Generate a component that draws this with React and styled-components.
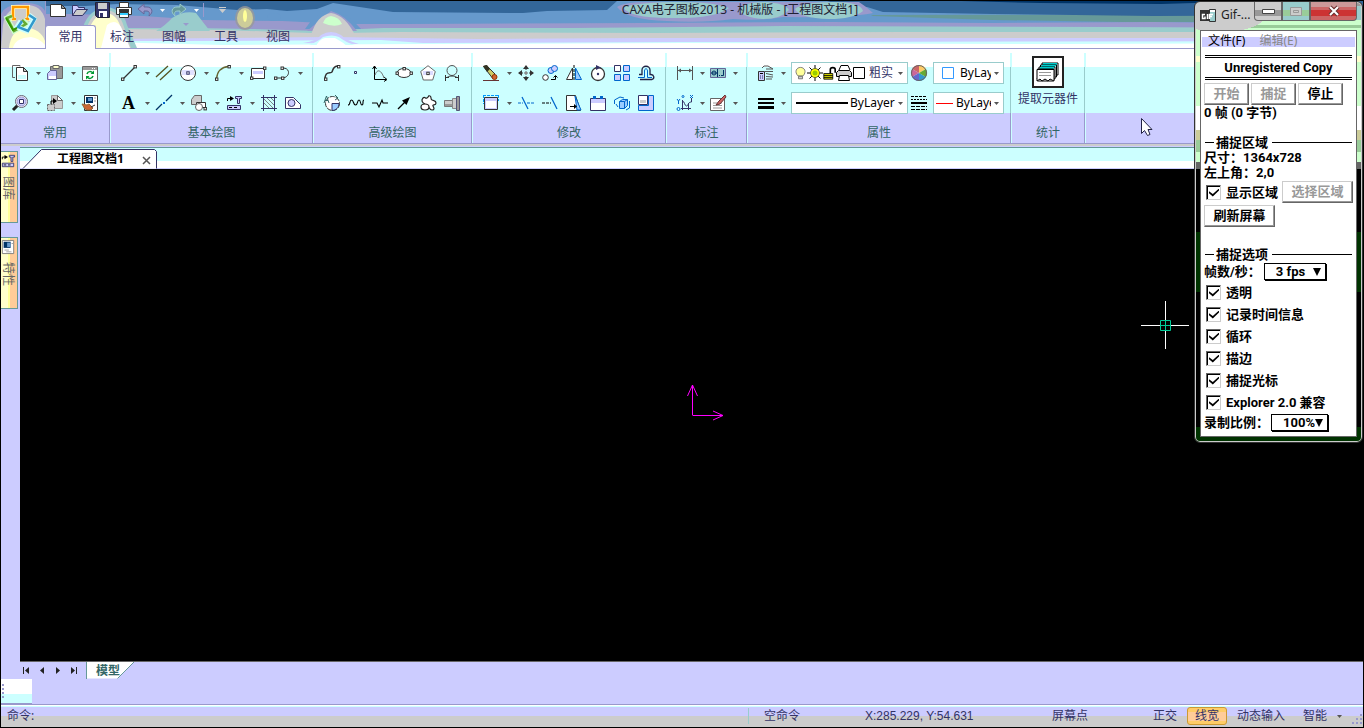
import React from 'react';
import styled, { createGlobalStyle, css } from 'styled-components';

const Global = createGlobalStyle`
  *, *::before, *::after { box-sizing: border-box; }
  body { margin: 0; background: #000; overflow: hidden; }
  body, button, select, input {
    font-family: "Noto Sans", "Noto Sans CJK SC", sans-serif;
    font-size: 12px;
    line-height: 16px;
  }
  button { border: 0; padding: 0; margin: 0; background: none; color: inherit; white-space: nowrap; }
  select { appearance: none; border: 0; margin: 0; padding: 0; background: none; color: inherit; border-radius: 0; }
  svg { display: block; flex: none; overflow: visible; }
`;

const Screen = styled.div`
  position: relative;
  display: flex;
  flex-direction: column;
  height: 100vh;
  border: 1px solid #000;
  background: #ccf;
  color: #336;
`;

/* ---------- header ---------- */

const Header = styled.header`
  position: relative;
  display: flex;
  height: 48px;
  border-bottom: 1px solid #99c;
  background: #fff;
`;

const Glass = styled.svg`
  position: absolute;
  left: 0;
  top: 0;
  width: 100%;
  height: 47px;
`;

const AppButton = styled.button`
  position: relative;
  width: 44px;
  padding: 4px 0 0 3px;
  display: flex;
  align-items: flex-start;
`;

const HeaderMain = styled.div`
  position: relative;
  flex: 1;
  display: flex;
  flex-direction: column;
  justify-content: space-between;
`;

const TitleRow = styled.div`
  display: flex;
  align-items: center;
  height: 18px;
`;

const QuickBar = styled.div`
  display: flex;
  align-items: center;
  width: 183px;
  height: 18px;
  padding-left: 1px;
  border-left: 1px solid #99c;
`;

const QuickButton = styled.button`
  display: flex;
  align-items: center;
  justify-content: center;
  width: ${p => p.$narrow ? 12 : 22}px;
  height: 18px;
`;

const QuickEnd = styled.div`
  display: flex;
  align-items: center;
  height: 14px;
  margin-left: 1px;
  padding-left: 12px;
  border-left: 1px solid #99c;
`;

const Title = styled.h1`
  flex: 1;
  margin: 0;
  padding-right: 111px;
  font-size: 12px;
  font-weight: 400;
  text-align: center;
  color: #223;
`;

const Tabs = styled.nav`
  display: flex;
  height: 24px;
  margin-bottom: -1px;
`;

const Tab = styled.button`
  width: ${p => p.$active ? 51 : 52}px;
  height: 24px;
  padding-bottom: 1px;
  ${p => p.$active && css`
    background: #fff;
    border: 1px solid #99c;
    border-bottom: 0;
    border-radius: 3px 3px 0 0;
  `}
`;

/* ---------- ribbon ---------- */

const Ribbon = styled.section`
  display: grid;
  grid-template-columns: 110px 203px 159px 194px 81px 264px 74px 1fr;
  height: 97px;
  border-bottom: 2px solid #ccc;
  box-shadow: inset 0 -1px #99c;
  background: linear-gradient(#fff 0 18px, #cff 18px 64px, #ccf 64px);
`;

const GroupBox = styled.section`
  display: flex;
  flex-direction: column;
  gap: 8px;
  padding: 13px 0 0 ${p => p.$first ? 11 : 10}px;
  margin-bottom: 1px;
  background:
    linear-gradient(#cff, #cff) right 0 top 4px / 1px 100% no-repeat,
    linear-gradient(#cff 0 14px, #9cc 14px 60px, #99c 60px) right 1px top 4px / 1px 100% no-repeat;
`;

const Row = styled.div`
  display: flex;
  align-items: center;
  height: 22px;
`;

const GroupTitle = styled.h2`
  margin: 3px 2px 0 ${p => p.$first ? -11 : -10}px;
  font-size: 12px;
  line-height: 16px;
  font-weight: 400;
  text-align: center;
  color: #366;
`;

const ToolBox = styled.div`
  display: flex;
  align-items: center;
  width: ${p => p.$arrow ? (p.$tight ? 33 : 35) : 24}px;
`;

const ToolButton = styled.button`
  width: 16px;
  height: 18px;
  display: flex;
  align-items: center;
`;

const ArrowButton = styled.button`
  width: ${p => p.$tight ? 17 : 19}px;
  height: 18px;
  display: flex;
  align-items: center;
  justify-content: center;
  padding-left: 2px;
`;

const Combo = styled.label`
  display: flex;
  align-items: center;
  width: ${p => p.$wide ? 117 : 71}px;
  height: 22px;
  padding: 0 4px;
  gap: 3px;
  background: #fff;
  border: 1px solid #9cc;
`;

const LayerMarks = styled.span`
  display: flex;
  align-items: center;
  margin-left: -2px;
`;

const WideLine = styled.svg`
  margin-right: -2px;
`;

const ComboSelect = styled.select`
  flex: 1;
  min-width: 0;
  height: 20px;
  color: ${p => p.$blue ? '#336' : '#000'};
`;

const WheelButton = styled.button`
  width: 25px;
  padding-left: 3px;
  height: 18px;
  display: flex;
  align-items: center;
`;

const ExtractButton = styled.button`
  display: flex;
  flex-direction: column;
  align-items: center;
  gap: 3px;
  height: 52px;
  margin: -6px 4px 6px -8px;
  color: #336;
`;

/* ---------- work area ---------- */

const Work = styled.div`
  flex: 1;
  display: flex;
  min-height: 0;
  padding-top: 1px;
`;

const SideBar = styled.aside`
  width: 19px;
  padding-top: 4px;
  display: flex;
  flex-direction: column;
  gap: 14px;
`;

const SideTab = styled.button`
  width: 17px;
  height: 72px;
  display: flex;
  flex-direction: column;
  align-items: flex-start;
  gap: 8px;
  padding-top: 2px;
  border: 1px solid #699;
  border-left: 0;
  background: linear-gradient(90deg, #ffc 0 7px, #ff9 7px 9px, #fc9 9px);
  color: #666;
`;

const SideText = styled.span`
  writing-mode: vertical-rl;
  text-orientation: sideways;
  line-height: 14px;
`;

const DocArea = styled.main`
  flex: 1;
  display: flex;
  flex-direction: column;
  min-width: 0;
`;

const DocTabs = styled.div`
  display: flex;
  height: 22px;
  border-top: 1px solid #699;
  background: linear-gradient(#cff 0 13px, #fff 13px 20px, #ccf 20px);
`;

const DocTab = styled.div`
  position: relative;
  display: flex;
  align-items: center;
  width: 138px;
  height: 21px;
  padding: 0 7px 0 37px;
  justify-content: space-between;
  font-weight: 700;
  color: #000;
  > svg { position: absolute; left: 0; top: 0; }
  > span { position: relative; }
  > button { position: relative; padding-top: 3px; }
`;

const Canvas = styled.div`
  position: relative;
  flex: 1;
  display: flex;
  align-items: center;
  justify-content: center;
  background: #000;
  border-bottom: 1px solid #666;
`;

const Axis = styled.svg`
  margin: -30px 0 0 26px;
`;

const CrossHair = styled.svg`
  position: absolute;
  right: 174px;
  top: 132px;
`;

const Pointer = styled.svg`
  position: absolute;
  right: 209px;
  top: 116px;
`;

const SheetBar = styled.div`
  display: flex;
  height: 17px;
`;

const NavButton = styled.button`
  width: 16px;
  height: 17px;
  padding-right: 4px;
  display: flex;
  align-items: center;
  justify-content: center;
`;

const SheetTab = styled.button`
  position: relative;
  width: 49px;
  height: 17px;
  margin-left: 2px;
  padding-left: 10px;
  text-align: left;
  font-weight: 700;
  line-height: 17px;
  color: #366;
  > svg { position: absolute; left: 0; top: 0; }
  > span { position: relative; }
`;

const CommandArea = styled.div`
  height: 26px;
  border-bottom: 1px solid #99c;
`;

const Gripper = styled.div`
  width: 31px;
  height: 25px;
  border-bottom: 1px solid #99c;
  background: linear-gradient(#fff 0 15px, #cff 15px);
`;

const Status = styled.footer`
  display: flex;
  align-items: center;
  height: 22px;
  padding-bottom: 1px;
  border-top: 1px solid #fff;
  background: linear-gradient(#cff 0 1px, #ccf 1px 10px, #ccc 10px);
`;

const Command = styled.div`
  flex: 1;
  padding-left: 6px;
`;

const StatusCell = styled.div`
  width: ${p => p.$w}px;
  padding-left: ${p => p.$first ? 15 : 0}px;
  border-left: ${p => p.$first ? '1px solid #9cc' : '0'};
  font-family: "Liberation Sans", "Noto Sans CJK SC", sans-serif;
  white-space: nowrap;
`;

const StatusButton = styled.button`
  height: 18px;
  padding: 0 7px;
  border: 1px solid ${p => p.$on ? '#c93' : 'transparent'};
  border-radius: 3px;
  background: ${p => p.$on ? 'linear-gradient(#fc6 0 4px, #fc9 4px 13px, #fc6 13px)' : 'none'};
  display: flex;
  align-items: center;
  gap: 10px;
`;

const StatusEnd = styled.div`
  display: flex;
  align-items: center;
  gap: 2px;
  width: 218px;
`;

const SizeGrip = styled.svg`
  margin-left: auto;
  align-self: flex-end;
`;

/* ---------- recorder window ---------- */

const GifWindow = styled.aside`
  position: absolute;
  right: 0;
  top: 0;
  width: 169px;
  padding: 0 5px 5px;
  border: 1px solid #333;
  border-radius: 6px;
  box-shadow: inset 0 0 0 1px #ccc;
  color: #000;
  background:
    radial-gradient(ellipse 50px 20px at 26px 12px, #ccc 0 90%, transparent 91%),
    linear-gradient(#999 0 4px, #9cc 4px 18px, #cfc 18px 23px, #9c9 23px 26px, #cfc 26px 54px, #ffc 54px 60px, #cfc 60px 104px,
      #fff 104px 128px, #cc9 128px 138px, #9c9 138px 150px, #cfc 150px 160px, #666 160px 167px, #000 167px 230px, #030 230px 290px,
      #000 290px 425px, #030 425px);
`;

const GifTitle = styled.div`
  display: flex;
  align-items: flex-start;
  height: 28px;
  gap: 5px;
  > svg { margin-top: 5px; }
  > span { width: 28px; margin-top: 5px; color: #222; white-space: nowrap; }
`;

const WindowButtons = styled.div`
  display: flex;
`;

const CaptionButton = styled.button`
  width: ${p => p.$close ? 47 : 28}px;
  height: 19px;
  display: flex;
  align-items: center;
  justify-content: center;
  border: 1px solid #666;
  border-top: 0;
  border-radius: ${p => p.$close ? '0 0 4px 0' : p.$first ? '0 0 0 4px' : '0'};
  background: ${p => p.$close
    ? 'linear-gradient(#c99 0 5px, #c66 5px 8px, #c33 8px 14px, #c66 14px)'
    : p.$first
      ? 'linear-gradient(#ccc 0 8px, #999 8px 14px, #ccc 14px)'
      : 'linear-gradient(#9cc 0 8px, #9c9 8px 14px, #9cc 14px)'};
`;

const GifBody = styled.div`
  background: #fff;
  border: 1px solid #666;
  padding: 0 4px 4px 3px;
  font-family: Roboto, "Noto Sans CJK SC", sans-serif;
  font-size: 13px;
  font-weight: 700;
  line-height: 15px;
`;

const GifMenu = styled.div`
  display: flex;
  gap: 14px;
  height: 20px;
  margin: 0 -3px 0 -2px;
  padding: 0 0 1px 6px;
  background: linear-gradient(#fff 0 6px, #ccf 6px 16px, #fff 16px);
`;

const MenuButton = styled.button`
  color: ${p => p.disabled ? '#888' : '#000'};
`;

const Banner = styled.div`
  height: 25px;
  margin: 4px 0 3px 1px;
  border: solid #000;
  border-width: 3px 0;
  border-style: double none;
  text-align: center;
  line-height: 19px;
`;

const ButtonRow = styled.div`
  display: flex;
  align-items: center;
  gap: 2px;
`;

const ClassicButton = styled.button`
  width: ${p => p.$wide ? 71 : 45}px;
  height: 22px;
  flex: none;
  font: inherit;
  line-height: 16px;
  background: #fff;
  color: ${p => p.disabled ? '#999' : '#000'};
  border: 1px solid;
  border-color: #ccc #666 #666 #ccc;
  box-shadow: inset -1px -1px #999;
`;

const Legend = styled.h3`
  display: flex;
  align-items: center;
  gap: 2px;
  margin: ${p => p.$gap}px 0 0 1px;
  font: inherit;
  &::before { content: ""; width: 9px; height: 1px; background: #000; }
  &::after { content: ""; flex: 1; height: 1px; margin-left: 2px; background: #000; }
`;

const Line = styled.div`
  height: 15px;
`;

const CheckLabel = styled.label`
  display: flex;
  align-items: center;
  gap: 5px;
  height: 22px;
  padding-left: 2px;
  white-space: nowrap;
`;

const CheckBox = styled.input`
  appearance: none;
  position: relative;
  flex: none;
  width: 15px;
  height: 15px;
  margin: 0;
  background: #fff;
  border: 1px solid;
  border-color: #666 #ccc #ccc #666;
  box-shadow: inset 1px 1px #000;
  &:checked::after {
    content: "";
    position: absolute;
    left: 2px;
    top: 3px;
    width: 10px;
    height: 8px;
    background: #000;
    clip-path: polygon(0 35%, 0 60%, 38% 100%, 100% 25%, 100% 0, 38% 70%);
  }
`;

const CheckRow = styled.div`
  display: flex;
  align-items: center;
  justify-content: space-between;
  height: 22px;
  margin: 1px -1px 2px 0;
`;

const SelectRow = styled.label`
  display: flex;
  align-items: center;
  gap: ${p => p.$gap}px;
  height: 19px;
  white-space: nowrap;
`;

const DropBox = styled.span`
  display: flex;
  align-items: center;
  width: ${p => p.$w}px;
  height: 17px;
  padding: 0 4px 0 11px;
  border: 1px solid #000;
  box-shadow: 1px 1px #000;
`;

const DropSelect = styled.select`
  flex: 1;
  min-width: 0;
  height: 15px;
  font: inherit;
`;

/* ---------- icons ---------- */

const K = '#333';
const B = '#06c';
const sq = (x, y, c = K) => <rect key={`${x}-${y}`} x={x - 1} y={y - 1} width="2.4" height="2.4" fill="#fff" stroke={c} />;

const icons = {
  copy: <><path d="M8 1.5V.5H.5v12H3" stroke="#666" /><path d="M4.500 2.500h7l4 4v9h-11z" fill="#fff" stroke={K} /><path d="M11.500 2.500v4h4z" fill="#ccc" stroke={K} /><path d="M6 10h8v4H6z" fill="#cff" /></>,
  paste: <><path d="M3.500 1.500h12v12h-12z" fill="#999" stroke="#666" /><path d="M6 .5h6v3H6z" fill="#ffc" stroke="#666" /><path d="M.5 8.500l3-3h6v9h-9z" fill="#ccf" stroke="#669" /><path d="M2 11h7v3H2z" fill="#fff" /></>,
  refresh: <><path d="M.5 1.500h15v14H.5z" fill="#fff" stroke="#666" /><path d="M1 2h14v3H1z" fill="#999" /><path d="M10 3.500h1m1 0h1" stroke="#fff" /><path d="M5 9c1-3 4-3 6-1M11 11c-1 3-4 3-6 1" stroke="#093" strokeWidth="1.500" /><path d="M12 5.500V9H8.500zM4 14.500V11h3.500z" fill="#093" /></>,
  zoom: <><path d="M6 10L1 15" stroke="#222" strokeWidth="3" /><circle cx="9.500" cy="6.500" r="6" fill="#fff" stroke="#667" /><circle cx="9.500" cy="6.500" r="4.500" fill="#ccf" stroke="#99c" /><path d="M7.500 4.500h4v4h-4z" fill="#fff" stroke="#336" /></>,
  insert: <><path d="M4.500.5h6l5 5v8h-11z" fill="#ccc" stroke="#999" /><path d="M10.500.5v5h5z" fill="#fff" stroke="#666" /><path d="M.5 9.500h7v6h-7z" fill="#ccc" stroke="#666" strokeDasharray="2 1" /><path d="M4 9V6h3" stroke="#000" /><path d="M6 3l4 3-4 3z" fill="#000" /></>,
  brush: <><path d="M2.500.5h13v15h-13z" fill="#fff" stroke={K} /><path d="M4 2h7v6H4z" fill="#036" /><path d="M6 3h4v3H6z" fill="#69c" /><path d="M12 3h2M12 6h2" stroke="#999" /><path d="M0 9l5 1 2-1 4 4-2 2H5c-3-1-3-3-5-6z" fill="#c63" stroke="#963" /><path d="M9 12l4-2" stroke={K} /></>,
  props: <><path d="M1.500.5h13v15h-13z" fill="#fff" stroke="#777" /><path d="M3 2h8v7H3z" fill="#036" /><path d="M7 3h4v5H7z" fill="#69c" /><path d="M4 11.500h5M6 13.500h6M12 4h2" stroke="#999" /></>,
  line: <><path d="M2 14L14 2" stroke={K} strokeWidth="1.300" />{sq(1.500, 14)}{sq(14, 1.500)}</>,
  parallel: <path d="M0 12L12 1M4 15L16 4" stroke="#552" strokeWidth="1.300" />,
  circle: <><circle cx="8" cy="8" r="7.500" fill="#fff" stroke={K} /><path d="M2 5h12v5H2z" fill="#ccf" opacity=".6" />{sq(7.800, 7.800, '#336')}</>,
  arc: <><path d="M1.500 14C2 7 6 2 14 1.500" stroke="#663" strokeWidth="1.300" />{sq(1.500, 14)}{sq(14, 1.500)}</>,
  rect: <><path d="M1.500 3.500h13v10h-13z" fill="#fff" stroke={K} /><path d="M3 6h10v3H3z" fill="#ccf" />{sq(1.500, 13)}{sq(14.500, 3)}</>,
  poly: <><path d="M1 13h7c8 0 9-10 1-10" stroke={K} />{sq(1.500, 13)}{sq(8.500, 13)}{sq(8, 3)}</>,
  text: <text x="1" y="14" fontFamily="Liberation Serif, serif" fontWeight="700" fontSize="18" fill="#000">A</text>,
  center: <><path d="M0 15l6-6M10 6l6-6" stroke="#036" strokeWidth="1.300" /><path d="M7 7h2v2H7z" fill="#06c" /></>,
  blocks: <><path d="M.5 4.500l3-4h7v9H.5z" fill="#ccc" stroke="#666" /><path d="M5.500 7.500h9v5h-9z" fill="#fff" stroke={K} /><circle cx="8" cy="12" r="3.500" fill="#fff" stroke="#666" />{sq(14, 13.500)}</>,
  library: <><path d="M1.500 6V3.500H5" stroke="#000" /><path d="M4 1l4 2.500L4 6z" fill="#000" /><path d="M9.500 1.500h6v2h-2v5h-2v-5h-2z" fill="#ccf" stroke="#336" /><path d="M1.500 10.500h13v4h-13z" fill="#ccf" stroke="#336" /><path d="M3 12.500h10" stroke="#000" strokeDasharray="3 2" /></>,
  hatch: <><path d="M2.500 0v16M13.500 0v16M0 2.500h16M0 13.500h16" stroke="#336" /><path d="M3 4l9 9M3 8l5 5M6 3l7 7M10 3l3 3" stroke="#666" strokeWidth=".8" /></>,
  region: <><path d="M.5 13.500v-11h8l7 7v4z" fill="#fff" stroke="#336" /><circle cx="6.500" cy="8" r="3.500" fill="#ccf" stroke="#336" /></>,
  spline: <><path d="M1 14c0-9 6-5 7-7s1-6 6-6" stroke={K} strokeWidth="1.500" />{sq(1.500, 14)}{sq(14.500, 1.500)}</>,
  point: <path d="M6.500 6.500h2v2h-2z" fill="#fff" stroke="#336" />,
  formula: <><path d="M2.500 1v13.500H14" stroke="#000" /><path d="M.5 4l2-3 2 3M12 12l3 2.500-3 2" stroke="#000" /><path d="M3 10c3-8 7-3 9 3" stroke="#666" /></>,
  ellipse: <><ellipse cx="8" cy="8" rx="7" ry="4.500" fill="#fff" stroke={K} />{sq(8, 3.500)}{sq(1, 8)}{sq(15, 8)}</>,
  polygon: <><path d="M8 .7l7.300 5.800L12.700 15H3.300L.7 6.500z" fill="#fff" stroke="#666" /><path d="M3 6h10v4H3z" fill="#ccf" opacity=".7" />{sq(7.800, 8.200)}</>,
  roundhole: <><circle cx="8" cy="5.500" r="5" fill="#cff" stroke="#555" /><path d="M1.500 10v6M14.500 10v6M1 12.500h4M11 12.500h4M3 12.500c3-2 7-2 10 0" stroke={K} /></>,
  detail: <><circle cx="8.500" cy="8.500" r="7" fill="#fff" stroke={K} strokeDasharray="5 1" /><path d="M8 8.500h7c0 4-3 7-7 7z" fill="#9cf" stroke="#336" /><path d="M0 8l2.500-7L5 8M1 5.500h3M11 0l3 3-3 2" stroke="#366" /></>,
  wave: <path d="M0 10c3 0 1-5 3.500-5S5 10 7.500 10 9 5 11 5s1 5 3 5 0-5 2-5" stroke="#000" strokeWidth="1.100" />,
  breakline: <path d="M0 8h5l2 4 3-7 1 3h5" stroke="#000" strokeWidth="1.100" />,
  arrow: <><path d="M2 14L10 6" stroke="#000" strokeWidth="1.300" /><path d="M14 2L6 5.500 10.500 10z" fill="#000" /></>,
  gear: <><path d="M5 9C2 8 1 5 3 3s2 1 4 0 1-3 3-2 0 3 2 4 4 0 4 3-4 1-3 3 2 4-1 4-2-3-4-3" fill="#fff" stroke="#222" strokeWidth="1.200" /><ellipse cx="5" cy="12" rx="4" ry="3" fill="#fff" stroke="#222" strokeWidth="1.200" /></>,
  shaft: <><path d="M.5 5.500h8v6h-8z" fill="#999" stroke="#777" /><path d="M8.500 3.500h4v10h-4z" fill="#ccc" stroke="#888" /><path d="M12.500 1.500h3v14h-3z" fill="#999" stroke="#557" /><path d="M1 6h7v3H1z" fill="#ccc" /></>,
  eraser: <><path d="M0 15.500h16" stroke="#633" /><path d="M.5 1.500l3-1L12 9l-3 3.500z" fill="#cc6" stroke={K} /><path d="M0 1l4-1 3 4-3 3z" fill="#332" /><circle cx="11.500" cy="12" r="2.500" fill="#c63" stroke="#930" /></>,
  move: <><path d="M8 1v4M8 11v4M1 8h4M11 8h4" stroke="#333" /><path d="M8 0l3 4H5zM8 16l3-4H5zM0 8l4-3v6zM16 8l-4-3v6z" fill="#333" /><path d="M7 7h2v2H7z" fill="#fff" stroke="#666" /></>,
  clone: <><circle cx="3.500" cy="12.500" r="2.800" fill="#fff" stroke={K} /><circle cx="9" cy="5.500" r="3" fill="#ccf" stroke={B} /><circle cx="12.500" cy="3.500" r="3" fill="#ccf" stroke={B} /><path d="M9 14.500h4.500V11M11.500 12.500l2-2 2 2" stroke="#000" /></>,
  mirror: <><path d="M8 0v16" stroke="#000" strokeDasharray="3 1" /><path d="M6.500 3v11.500h-6z" fill="#fff" stroke={K} /><path d="M9.500 3v11.500h6z" fill="#9cf" stroke={B} /></>,
  rotate: <><circle cx="8" cy="9" r="6.500" fill="#fff" stroke={K} strokeWidth="1.300" /><path d="M6 0l5 2.500L6 5z" fill="#336" /><circle cx="8" cy="9" r="1.200" fill="#336" /></>,
  array: <><path d="M.5.5h6v6h-6z" fill="#fff" stroke="#336" /><path d="M9.500.5h6v6h-6zM.5 9.500h6v6h-6zM9.500 9.500h6v6h-6z" fill="#ccf" stroke={B} /></>,
  offset: <><path d="M2 14.500h12c3-1 2-5-1-5h-1V5C12 0 4 0 4 5v4.500H1" stroke="#224" strokeWidth="1.300" /><path d="M0 12.500h6.500V6c0-3 3-3 3 0v6.500H14" fill="#cff" stroke={B} /></>,
  stretch: <><path d="M1.500 2.500h13v12h-13z" fill="#ccf" stroke={K} /><path d="M3 6h10v7H3z" fill="#fff" /><path d="M0 .5h16M.5 0v9M15.500 0v6" stroke="#09f" strokeDasharray="3 1" /></>,
  trim: <><path d="M0 8h5M9 8h8" stroke={B} strokeDasharray="3 1" /><path d="M4 2l6 12" stroke={B} strokeWidth="1.200" /></>,
  extend: <><path d="M0 8h9" stroke="#000" strokeDasharray="3 1" /><path d="M9 2l6 12" stroke={B} strokeWidth="1.200" /></>,
  edge: <><path d="M.5.5h9l5 15H.5z" fill="#fff" stroke={K} /><path d="M9 1l6 14h-4z" fill="#9cf" stroke={B} /><path d="M4 11.500h6" stroke="#000" /><path d="M8 9l3 2.500L8 14z" fill="#000" /></>,
  breakpt: <><path d="M.5 3.500h15v12H.5z" fill="#fff" stroke="#336" /><path d="M1 4h14v4H1z" fill="#ccf" /><path d="M3 1h3v3H3zM10 1h3v3h-3z" fill="#06c" /></>,
  explode: <><path d="M5.500 6.500l3-2h5v6l-3 3h-5z" fill="#9cf" stroke={B} /><path d="M5.500 6.500h5v7M10.500 6.500l3-2" stroke={B} /><path d="M.5 5L6 2l4 1M2 9l2 3M12 15l3.500-2V6M.5 5v4" stroke={B} /></>,
  scale: <><path d="M.5 15.500v-5h10V.5h5v15z" fill="#ccf" stroke={B} /><path d="M.5.5h9v9h-9z" fill="#fff" stroke="#336" /><path d="M2 5h6v3H2z" fill="#ccc" /></>,
  dim: <><path d="M.5 1v14M15.500 1v14M1 5.500h14" stroke="#555" /><path d="M1 5.500l3-2v4zM15 5.500l-3-2v4z" fill="#555" /></>,
  tolerance: <><path d="M.5 3.500h15v9H.5z" fill="#9cc" stroke="#669" /><path d="M7.500 4v8" stroke="#036" /><circle cx="4" cy="8" r="2" stroke="#036" /><path d="M1 8h6M9 10.500h1M11 10.500h2.500V5" stroke="#036" /></>,
  coord: <><path d="M5.500 5v10M4 13.500h10M5.500 6c2 0 2 5 4 5s1-4 5-4V3" stroke="#336" /><path d="M11.500 8v7" stroke="#336" /><circle cx="1.500" cy="14" r="1.500" stroke={B} /><path d="M0 4l1.500 2v3M3 4L1.500 6" stroke={B} /><circle cx="6" cy="1.500" r="1" stroke={B} /><path d="M13 0l3 3M16 0l-3 3" stroke={B} /></>,
  editdim: <><path d="M.5 3.500h14v12H.5z" fill="#fff" stroke="#666" /><path d="M3 8h9M3 10.500h9M3 13h9" stroke="#999" /><path d="M15 0L9 6l-3 4 4-1 6-7z" fill="#c66" stroke="#633" /></>,
  layers: <><path d="M4 3l2-2h4l5 3H8M7 6.500h8M8 8.500l7 1.500M8 11.500l7 .5M8 14h6" stroke="#555" /><path d="M.5 6.500h6v9h-6z" fill="#ccf" stroke={K} /><path d="M2 8.500h3" stroke="#000" /><path d="M2 11h1m1 0h1m-3 2h1m1 0h1" stroke="#336" /></>,
  weight: <><path d="M0 4h16" stroke="#000" strokeWidth="2" /><path d="M0 8h16" stroke="#000" strokeWidth="2" /><path d="M0 12.500h16" stroke="#000" strokeWidth="3" /></>,
  styles: <><path d="M0 1.500h16" stroke="#000" strokeDasharray="3 1" /><path d="M0 4.500h16" stroke="#000" strokeDasharray="2 1" /><path d="M0 8h16" stroke="#000" strokeWidth="2" /><path d="M0 11.500h16M0 14.500h16" stroke="#000" strokeDasharray="4 1" /></>,
  wheel: <><path d="M8 8V0a8 8 0 0 1 7 4z" fill="#fc6" /><path d="M8 8V0a8 8 0 0 0-7 4z" fill="#c66" /><path d="M8 8L1 4a8 8 0 0 0 0 8z" fill="#c69" /><path d="M8 8l-7 4a8 8 0 0 0 7 4z" fill="#66c" /><path d="M8 8v8a8 8 0 0 0 7-4z" fill="#39c" /><path d="M8 8l7 4a8 8 0 0 0 0-8z" fill="#6a3" /><circle cx="8" cy="8" r="7.500" stroke="#666" /></>,
  bulb: <><path d="M5 11C0 6 3 .5 8 .5S16 6 11 11z" fill="#ff9" stroke="#666" /><path d="M5.500 11.500h5v3h-5z" fill="#ccc" stroke="#666" /></>,
  sun: <><path d="M8 0v16M0 8h16M2.500 2.500l11 11M13.500 2.500l-11 11" stroke="#000" /><circle cx="8" cy="8" r="4.500" fill="#ff0" stroke="#663" /><circle cx="8" cy="8" r="2.500" fill="#9c0" /></>,
  lock: <><path d="M9 8V3c0-3 6-3 6 0v4" stroke="#000" strokeWidth="2" /><path d="M1 8h11v7H1z" fill="#cc0" stroke="#000" /><path d="M1 10.500h11M1 13h11" stroke="#000" /></>,
  printer: <><path d="M3 5l2-4.500h7L14 5" fill="#fff" stroke="#000" /><path d="M2.500 5.500h11l2 2v4H.5v-4z" fill="#ccc" stroke="#000" /><path d="M3.500 10.500h9l1 5h-11z" fill="#fff" stroke="#000" /></>,
  newdoc: <><path d="M.5 2.500h11l4 4v8H.5z" fill="#fff" stroke="#333" /><path d="M11.500 2.500v4h4z" fill="#999" stroke={K} /></>,
  open: <><path d="M.5 13.500v-10h5l1 2h6v3" fill="#ccf" stroke="#336" /><path d="M.5 13.500l4-6h11l-5 6z" fill="#ccc" stroke="#336" /></>,
  save: <><path d="M1.500.5h14v15h-12l-2-2z" fill="#336" stroke="#223" /><path d="M4 1h9v6H4z" fill="#ccc" /><path d="M5 9h8v6H5z" fill="#fff" /><path d="M6 11h3v4H6z" fill="#336" /></>,
  print: <><path d="M3.500 5.500v-5h9v5" fill="#fff" stroke={K} /><path d="M.5 5.500h15v7H.5z" fill="#fff" stroke={K} /><path d="M3 7h10v3H3z" fill="#333" /><path d="M3.500 10.500h9v5h-9z" fill="#fff" stroke={K} /><path d="M4 11h8v2H4z" fill="#3cf" /></>,
  undo: <path d="M1 7l6-5v3h3c5 0 7 5 2 9 1-4 0-5-3-5H7v3z" fill="#99c" stroke="#669" />,
  redo: <path d="M15 7L9 2v3H6C1 5-1 10 4 14 3 10 4 9 7 9h2v3z" fill="#699" stroke="#9cc" />,
};

const Icon = ({ name, size = 16 }) => (
  <svg width={size} height={size} viewBox="0 0 16 16" fill="none" aria-hidden="true">{icons[name]}</svg>
);

const Down = ({ color = '#555' }) => (
  <svg width="5" height="3" viewBox="0 0 5 3" aria-hidden="true"><path d="M0 0h5L2.500 3z" fill={color} /></svg>
);

const Logo = () => (
  <svg width="33" height="30" viewBox="0 0 33 30" fill="none" aria-hidden="true">
    <path d="M12 14H9V2h15v12h-3" stroke="#ffc" strokeWidth="4" />
    <path d="M12 14H9V2h15v12h-3" stroke="#f90" strokeWidth="2.500" />
    <path d="M8 11l-5 2 7 13 13-7-4-4" stroke="#cfc" strokeWidth="5" />
    <path d="M8 11l-5 2 7 13 12-7-4-4" stroke="#6a3" strokeWidth="2.500" />
    <path d="M25 10l5 4-7 12-10-4 4-6" stroke="#cff" strokeWidth="5" />
    <path d="M25 10l6 4-7 12-10-4 4-6" stroke="#39c" strokeWidth="2.500" />
    <path d="M2 13l7 12 4-2" stroke="#390" strokeWidth="2" />
  </svg>
);

const GlassBackdrop = () => (
  <Glass viewBox="0 0 1362 47" preserveAspectRatio="none" aria-hidden="true">
    <path d="M0 0h1362v42l-300 1-380-1-260 1-200 1-120-3H0z" fill="#cff" />
    <path d="M0 0h1362v40l-680 1-260 1-42-3-200 1H0z" fill="#ccf" />
    <path d="M0 0h1362v37H640l-160 1-150-2-230 2H0z" fill="#ccc" />
    <path d="M0 0h1362v31H900l-250 1-250-1-60 1-30 0-90-3-100-1H0z" fill="#9cc" />
    <path d="M0 0h1362v27l-250-1-330-1-210 2-190 0-64 3-66-2-60-1-100 0H0z" fill="#99c" />
    <path d="M0 0h1362v23l-210-2-160 1-160-1-190 1-240 1-60 0-60-3-80-1-60-4-70-2H0z" fill="#69c" />
    <path d="M870 14l492-1v8l-240 0-130-2-120-4z" fill="#699" />
    <path d="M0 0h1362v14l-210 1-160-2-110-2-16-5h-20l-20-6H616l-10 9-60 1-24 2-130-1-40-6-20-3-16 6-30 2-20-2-30 1-60-5-60-1-32 2H0z" fill="#369" />
    <path d="M960 0h300l-100 3-120-1z" fill="#036" />
    <path d="M616 6q8-5 30-5h212q8 5 14 11-22 5-90 4-20 4-50 2-30 4-66 2-40-1-50-14z" fill="#99c" />
    <path d="M622 6q20-5 56-5 34 0 50 6-14 11-60 10-40 0-46-11zM738 8q6-7 26-7 20 1 24 8-8 9-26 9-22-2-24-10zM794 8q8-7 38-7 28 0 30 9-10 8-34 8-30-1-34-10z" fill="#9cc" />
    <path d="M0 0h44v47H0z" fill="#69c" />
    <path d="M0 14Q2 4 24 2q16 0 20 8v37H0z" fill="#99c" />
    <path d="M2 24Q4 6 26 4q14 0 18 14v29H0z" fill="#ccc" />
    <path d="M8 47Q10 29 24 26q16 2 20 14v7z" fill="#ffc" />
    <path d="M12 47q2-10 18-11 8 1 14 8v3z" fill="#fff" />
    <path d="M82 26Q88 8 106 6q16 2 20 18l10 23H84z" fill="#9cc" />
    <path d="M86 26Q92 9 106 9q13 2 17 17l7 21H86z" fill="#ccc" />
    <path d="M89 26Q95 12 106 12q11 2 14 16l5 19H89z" fill="#ffc" />
    <path d="M106 24q8-7 14 2 4 8 9 21h-29z" fill="#fff" />
    <path d="M155 30q10-6 16-13 12-8 24-5 6 8 14 18z" fill="#9cc" />
    <path d="M182 22l6 0-3 3z" fill="#99c" />
    <ellipse cx="273" cy="16" rx="7" ry="4" fill="#69c" />
    <ellipse cx="244" cy="17" rx="10" ry="12" fill="#999" opacity=".8" />
    <ellipse cx="244" cy="17" rx="8" ry="10" fill="#cc9" />
    <ellipse cx="244" cy="15" rx="2" ry="6" fill="#ff9" />
    <path d="M304 28q10-16 26-20 16 3 30 20z" fill="#69c" />
    <path d="M306 30q12-10 24-20 14 4 26 20z" fill="#99c" />
    <path d="M310 34q6-20 20-22 14 2 24 22z" fill="#ccc" />
    <path d="M322 22q2-6 8-7 8 1 11 8-8 4-19-1z" fill="#cfc" />
    <path d="M302 42q14-2 18-8 10-6 20 0 6 6 18 9z" fill="#ccf" />
    <path d="M308 44q10-4 14-8 9-3 16 0 6 5 16 8z" fill="#cff" />
    <path d="M314 47q4-9 10-10h10q8 4 14 10z" fill="#fff" />
  </Glass>
);

const Stack = () => (
  <svg width="32" height="32" viewBox="0 0 32 32" fill="none" aria-hidden="true">
    <path d="M1 1h30v30H1z" fill="#fff" stroke="#222" strokeWidth="2" />
    {[[10, 7], [8.500, 9], [7, 11], [5.500, 13]].map(([x, y]) => (
      <g key={x}>
        <path d={`M${x} ${y}h16v12h-16z`} fill="#fff" stroke="#000" />
        <path d={`M${x + 1} ${y + 1}h14`} stroke="#0cc" strokeWidth="2" />
      </g>
    ))}
    <path d="M5 13.500h17v9h-17z" fill="#fff" stroke="#000" />
    <path d="M7 16.500h12M7 19.500h12" stroke="#999" />
    <path d="M5 22v3l3-2 2 2 3-2 3 2 2-2 4 2v-3" fill="#fff" stroke="#000" />
  </svg>
);

/* ---------- pieces ---------- */

const Tool = ({ name, label, arrow, tight }) => (
  <ToolBox $arrow={arrow} $tight={tight}>
    <ToolButton aria-label={label}><Icon name={name} /></ToolButton>
    {arrow && <ArrowButton $tight={tight} aria-label={`${label}选项`}><Down /></ArrowButton>}
  </ToolBox>
);

const tool = ([name, label, arrow]) => <Tool key={name} name={name} label={label} arrow={arrow} />;

const Group = ({ title, first, children }) => (
  <GroupBox $first={first}>
    {children}
    <GroupTitle $first={first}>{title}</GroupTitle>
  </GroupBox>
);

const groups = [
  ['常用', [
    [['copy', '复制', true], ['paste', '粘贴', true], ['refresh', '刷新']],
    [['zoom', '缩放', true], ['insert', '插入', true], ['brush', '特性匹配']],
  ]],
  ['基本绘图', [
    [['line', '直线', true], ['parallel', '平行线'], ['circle', '圆', true], ['arc', '圆弧', true], ['rect', '矩形'], ['poly', '多段线', true]],
    [['text', '文字', true], ['center', '中心线', true], ['blocks', '块', true], ['library', '图库', true], ['hatch', '剖面线'], ['region', '填充']],
  ]],
  ['高级绘图', [
    [['spline', '样条'], ['point', '点'], ['formula', '公式曲线'], ['ellipse', '椭圆'], ['polygon', '正多边形'], ['roundhole', '圆弧拟合']],
    [['detail', '局部放大'], ['wave', '波浪线'], ['breakline', '双折线'], ['arrow', '箭头'], ['gear', '齿轮'], ['shaft', '孔轴']],
  ]],
  ['修改', [
    [['eraser', '删除', true], ['move', '平移'], ['clone', '平移复制'], ['mirror', '镜像'], ['rotate', '旋转'], ['array', '阵列'], ['offset', '等距线']],
    [['stretch', '拉伸', true], ['trim', '裁剪'], ['extend', '延伸'], ['edge', '过渡'], ['breakpt', '打断'], ['explode', '分解'], ['scale', '缩放']],
  ]],
];

const checks = ['透明', '记录时间信息', '循环', '描边', '捕捉光标', 'Explorer 2.0 兼容'];

const Check = ({ children }) => (
  <CheckLabel><CheckBox type="checkbox" defaultChecked />{children}</CheckLabel>
);

const Drop = ({ w, value }) => (
  <DropBox $w={w}>
    <DropSelect defaultValue={value}><option>{value}</option></DropSelect>
    <svg width="8" height="8" viewBox="0 0 8 8" aria-hidden="true"><path d="M0 0h8L4 8z" fill="#000" /></svg>
  </DropBox>
);

const GifRecorder = () => (
  <GifWindow>
    <GifTitle>
      <svg width="16" height="16" viewBox="0 0 16 16" fill="none" aria-hidden="true">
        <path d="M0 3h11v11H0z" fill="#333" /><path d="M9.500 2.500h6v12h-6z" fill="#9cc" stroke="#333" /><path d="M10 3h5v2h-5z" fill="#fff" />
        <path d="M5 7.500H2.500v4H5v-2M7.500 7v5M9.500 12V7.500H13M9.500 9.500H12" stroke="#fff" strokeWidth="1.500" />
      </svg>
      <span>Gif-...</span>
      <WindowButtons>
        <CaptionButton $first aria-label="最小化">
          <svg width="13" height="5"><path d="M.5.5h12v4H.5z" fill="#fff" stroke="#444" /></svg>
        </CaptionButton>
        <CaptionButton aria-label="最大化">
          <svg width="12" height="9" fill="none"><path d="M.5.5h11v8H.5zM3.500 3.500h5v2h-5z" fill="#ccc" stroke="#999" /></svg>
        </CaptionButton>
        <CaptionButton $close aria-label="关闭">
          <svg width="12" height="10" fill="none"><path d="M2 1l8 8M10 1L2 9" stroke="#633" strokeWidth="4" /><path d="M2 1l8 8M10 1L2 9" stroke="#fff" strokeWidth="2" /></svg>
        </CaptionButton>
      </WindowButtons>
    </GifTitle>
    <GifBody>
      <GifMenu>
        <MenuButton>文件(F)</MenuButton>
        <MenuButton disabled>编辑(E)</MenuButton>
      </GifMenu>
      <Banner>Unregistered Copy</Banner>
      <ButtonRow>
        <ClassicButton disabled>开始</ClassicButton>
        <ClassicButton disabled>捕捉</ClassicButton>
        <ClassicButton>停止</ClassicButton>
      </ButtonRow>
      <Line>0 帧 (0 字节)</Line>
      <Legend $gap={15}>捕捉区域</Legend>
      <Line>尺寸：1364x728</Line>
      <Line>左上角：2,0</Line>
      <CheckRow>
        <Check>显示区域</Check>
        <ClassicButton $wide disabled>选择区域</ClassicButton>
      </CheckRow>
      <ClassicButton $wide>刷新屏幕</ClassicButton>
      <Legend $gap={20}>捕捉选项</Legend>
      <SelectRow $gap={3}>帧数/秒：<Drop w={62} value="3 fps" /></SelectRow>
      {checks.map(c => <Check key={c}>{c}</Check>)}
      <SelectRow $gap={2}>录制比例：<Drop w={57} value="100%" /></SelectRow>
    </GifBody>
  </GifWindow>
);

const navs = [
  ['第一页', 'M0 0h1v7H0zM6 0v7L2 3.500z'],
  ['上一页', 'M5 0v7L1 3.500z'],
  ['下一页', 'M1 0v7l4-3.500z'],
  ['最后一页', 'M5 0h1v7H5zM0 0v7l4-3.500z'],
];

export default function App() {
  return (
    <Screen>
      <Global />
      <Header>
        <GlassBackdrop />
        <AppButton aria-label="菜单"><Logo /></AppButton>
        <HeaderMain>
          <TitleRow>
            <QuickBar>
              <QuickButton aria-label="新建"><Icon name="newdoc" /></QuickButton>
              <QuickButton aria-label="打开"><Icon name="open" /></QuickButton>
              <QuickButton aria-label="保存"><Icon name="save" /></QuickButton>
              <QuickButton aria-label="打印"><Icon name="print" /></QuickButton>
              <QuickButton aria-label="撤销"><Icon name="undo" /></QuickButton>
              <QuickButton $narrow aria-label="撤销选项"><Down color="#fff" /></QuickButton>
              <QuickButton aria-label="重做"><Icon name="redo" /></QuickButton>
              <QuickButton $narrow aria-label="重做选项"><Down color="#fff" /></QuickButton>
              <QuickEnd>
                <QuickButton $narrow aria-label="自定义">
                  <svg width="7" height="6" viewBox="0 0 7 6"><path d="M0 0h7v1H0zM0 2h7L3.500 6z" fill="#ccc" /></svg>
                </QuickButton>
              </QuickEnd>
            </QuickBar>
            <Title>CAXA电子图板2013 - 机械版 - [工程图文档1]</Title>
          </TitleRow>
          <Tabs>
            {['常用', '标注', '图幅', '工具', '视图'].map((t, i) => <Tab key={t} $active={i === 0}>{t}</Tab>)}
          </Tabs>
        </HeaderMain>
      </Header>

      <Ribbon>
        {groups.map(([title, rows], i) => (
          <Group key={title} title={title} first={i === 0}>
            {rows.map((r, j) => <Row key={j}>{r.map(tool)}</Row>)}
          </Group>
        ))}
        <Group title="标注">
          <Row><Tool name="dim" label="尺寸标注" arrow tight /><Tool name="tolerance" label="形位公差" arrow tight /></Row>
          <Row><Tool name="coord" label="坐标标注" arrow tight /><Tool name="editdim" label="标注编辑" arrow tight /></Row>
        </Group>
        <Group title="属性">
          <Row>
            <Tool name="layers" label="图层" arrow tight />
            <Combo $wide>
              <LayerMarks>
                <Icon name="bulb" size={13} /><Icon name="sun" /><Icon name="lock" size={13} /><Icon name="printer" />
                <svg width="14" height="14"><path d="M1.500 1.500h11v11h-11z" fill="#fff" stroke="#000" /></svg>
              </LayerMarks>
              <ComboSelect $blue aria-label="图层" defaultValue="粗实"><option>粗实</option></ComboSelect>
              <Down />
            </Combo>
            <WheelButton aria-label="颜色"><Icon name="wheel" /></WheelButton>
            <Combo>
              <svg width="19" height="14"><path d="M4.500 1.500h11v11h-11z" fill="#fff" stroke="#39f" /></svg>
              <ComboSelect aria-label="颜色" defaultValue="ByLayer"><option>ByLayer</option></ComboSelect>
              <Down />
            </Combo>
          </Row>
          <Row>
            <Tool name="weight" label="线宽" arrow tight />
            <Combo $wide>
              <WideLine width="53" height="4"><path d="M0 1h52v2H0z" fill="#000" /></WideLine>
              <ComboSelect aria-label="线宽" defaultValue="ByLayer"><option>ByLayer</option></ComboSelect>
              <Down />
            </Combo>
            <WheelButton aria-label="线型"><Icon name="styles" /></WheelButton>
            <Combo>
              <svg width="15" height="3"><path d="M-2 1h17v1H-2z" fill="#f00" /></svg>
              <ComboSelect aria-label="线型" defaultValue="ByLayer"><option>ByLayer</option></ComboSelect>
              <Down />
            </Combo>
          </Row>
        </Group>
        <Group title="统计">
          <ExtractButton><Stack />提取元器件</ExtractButton>
        </Group>
      </Ribbon>

      <Work>
        <SideBar>
          <SideTab><Icon name="library" size={14} /><SideText>图库</SideText></SideTab>
          <SideTab><Icon name="props" size={14} /><SideText>特性</SideText></SideTab>
        </SideBar>
        <DocArea>
          <DocTabs>
            <DocTab>
              <svg width="138" height="21" fill="none" aria-hidden="true">
                <path d="M3 20.500L21.500 1.500h113l2 2v17" fill="#fff" stroke="#336" />
              </svg>
              <span>工程图文档1</span>
              <button aria-label="关闭文档">
                <svg width="9" height="9" fill="none"><path d="M1 1l7 7M8 1L1 8" stroke="#555" strokeWidth="1.500" /></svg>
              </button>
            </DocTab>
          </DocTabs>
          <Canvas>
            <Axis width="36" height="32" viewBox="0 0 36 32" fill="none" stroke="#f0f" aria-hidden="true">
              <path d="M5.500 31V1M.5 12l5-11 5 11M5.500 31.500H36M26 27l10 4.500L26 36" />
            </Axis>
            <CrossHair width="48" height="48" fill="none" aria-hidden="true">
              <path d="M0 24.500h19M29 24.500h19M24.500 0v19M24.500 29v19" stroke="#fff" />
              <path d="M19.500 19.500h10v10h-10zM20 24.500h9M24.500 20v9" stroke="#0c9" />
            </CrossHair>
          </Canvas>
          <SheetBar>
            {navs.map(([label, d]) => (
              <NavButton key={label} aria-label={label}><svg width="6" height="7"><path d={d} fill="#222" /></svg></NavButton>
            ))}
            <SheetTab>
              <svg width="49" height="17" aria-hidden="true"><path d="M.5 0H48L32 16.500H.5z" fill="#fff" /><path d="M.5 0v17M48 0L31.500 16.500" stroke="#699" /></svg>
              <span>模型</span>
            </SheetTab>
          </SheetBar>
        </DocArea>
      </Work>

      <CommandArea>
        <Gripper>
          <svg width="4" height="19" aria-hidden="true"><path d="M1 5h2v2H1zM1 9h2v2H1zM1 13h2v2H1zM1 17h2v2H1z" fill="#99c" /></svg>
        </Gripper>
      </CommandArea>
      <Status>
        <Command>命令:</Command>
        <StatusCell $first $w={117}>空命令</StatusCell>
        <StatusCell $w={187}>X:285.229, Y:54.631</StatusCell>
        <StatusCell $w={93}>屏幕点</StatusCell>
        <StatusEnd>
          <StatusButton>正交</StatusButton>
          <StatusButton $on>线宽</StatusButton>
          <StatusButton>动态输入</StatusButton>
          <StatusButton>智能<Down /></StatusButton>
          <SizeGrip width="11" height="11" aria-hidden="true">
            <path d="M8 0h2v2H8zM4 4h2v2H4zM8 4h2v2H8zM0 8h2v2H0zM4 8h2v2H4zM8 8h2v2H8z" fill="#99c" />
          </SizeGrip>
        </StatusEnd>
      </Status>

      <Pointer width="14" height="20" fill="none" aria-hidden="true">
        <path d="M1.500 1.500v15l3-3 3 5 2.500-1-2-5h4z" fill="#fff" stroke="#224" />
      </Pointer>
      <GifRecorder />
    </Screen>
  );
}
